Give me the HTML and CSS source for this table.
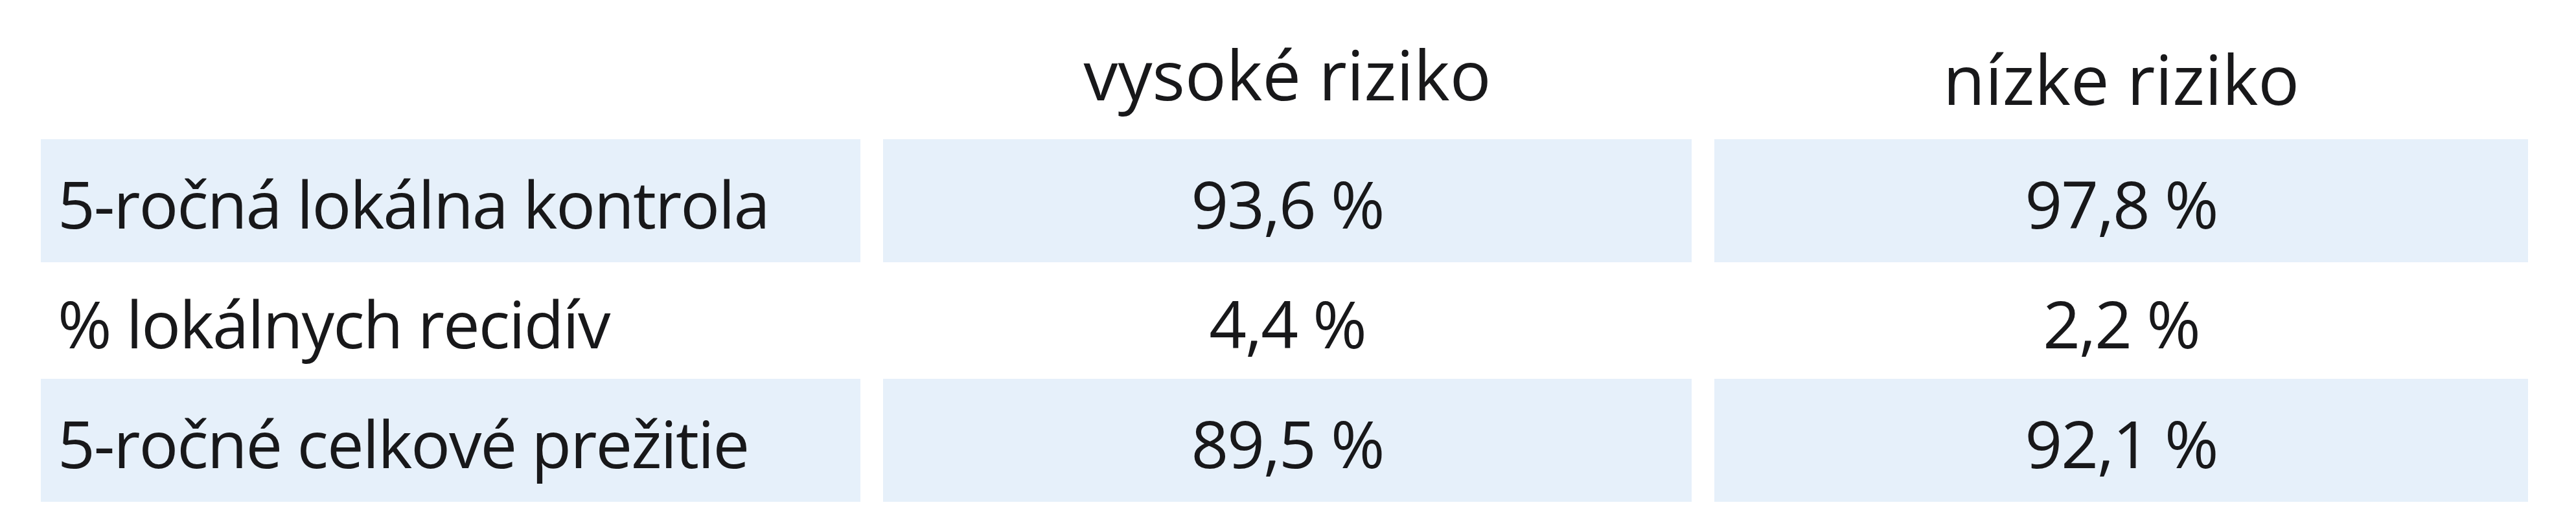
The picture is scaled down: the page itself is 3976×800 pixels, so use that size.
FILE: index.html
```html
<!DOCTYPE html>
<html lang="sk">
<head>
<meta charset="utf-8">
<title>Riziko</title>
<link rel="stylesheet" href="styles.css">
</head>
<body>
<div class="table">
  <div class="row head">
    <div class="cell label"></div>
    <div class="cell th">vysoké riziko</div>
    <div class="cell th th-low">nízke riziko</div>
  </div>
  <div class="row r1 shaded">
    <div class="cell label">5-ročná lokálna kontrola</div>
    <div class="cell val">93,6 %</div>
    <div class="cell val">97,8 %</div>
  </div>
  <div class="row r2">
    <div class="cell label">% lokálnych recidív</div>
    <div class="cell val">4,4 %</div>
    <div class="cell val">2,2 %</div>
  </div>
  <div class="row r3 shaded">
    <div class="cell label">5-ročné celkové prežitie</div>
    <div class="cell val">89,5 %</div>
    <div class="cell val">92,1 %</div>
  </div>
</div>
</body>
</html>
```
FILE: styles.css
```css
html, body {
  margin: 0;
  padding: 0;
  background: #ffffff;
}
body {
  width: 3976px;
  height: 800px;
  overflow: hidden;
  font-family: "Open Sans", "Liberation Sans", sans-serif;
  color: #18181a;
}
.table {
  display: grid;
  grid-template-columns: 1265px 1248px 1256px;
  column-gap: 35px;
  padding-left: 63px;
}
.row {
  display: contents;
}
.cell {
  display: flex;
  align-items: center;
  font-size: 101px;
  line-height: 101px;
  letter-spacing: -2px;
  white-space: nowrap;
  box-sizing: border-box;
  padding-top: 8px;
}
.head .cell {
  height: 215px;
  align-items: flex-start;
  padding-top: 64px;
}
.head .th {
  justify-content: center;
  font-size: 106px;
  letter-spacing: 0;
}
.head .th-low {
  padding-top: 71px;
}
.r1 .cell { height: 190px; }
.r2 .cell { height: 180px; }
.r3 .cell { height: 190px; }
.shaded .cell {
  background: #e6f0fa;
}
.label {
  padding-left: 26px;
}
.val {
  justify-content: center;
}
```
